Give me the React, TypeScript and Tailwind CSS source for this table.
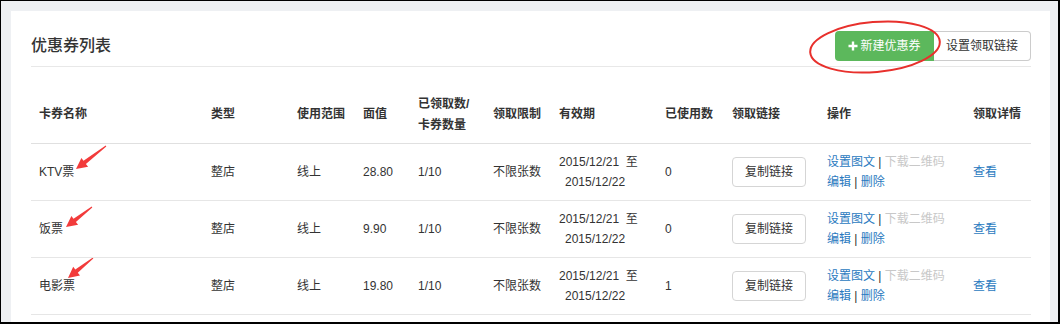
import React from "react";

type Pt = [number, number];

interface Coupon {
  name: string;
  price: string;
  used: string;
  arrow: [Pt, Pt];
}

const coupons: Coupon[] = [
  { name: "KTV票", price: "28.80", used: "0", arrow: [[75, 2], [45, 25]] },
  { name: "饭票", price: "9.90", used: "0", arrow: [[61, 6], [35, 26]] },
  { name: "电影票", price: "19.80", used: "1", arrow: [[62, 0], [37, 20]] },
];

const FONT = { fontFamily: '"Liberation Sans", "Noto Sans CJK SC", sans-serif' };

// hand-drawn style red pointer arrow (tail -> tip)
function RedArrow({ from, to }: { from: Pt; to: Pt }) {
  const [tx, ty] = from;
  const [px, py] = to;
  const len = Math.hypot(px - tx, py - ty);
  const ux = (px - tx) / len;
  const uy = (py - ty) / len;
  const nx = -uy;
  const ny = ux;
  const head = 11;
  const bx = px - ux * head;
  const by = py - uy * head;
  const p = (x: number, y: number) => `${x.toFixed(1)},${y.toFixed(1)}`;
  const pts = [
    p(px, py),
    p(bx + nx * 5.5, by + ny * 5.5),
    p(bx + nx * 2, by + ny * 2),
    p(tx + nx * 0.5, ty + ny * 0.5),
    p(tx - nx * 0.5, ty - ny * 0.5),
    p(bx - nx * 2, by - ny * 2),
    p(bx - nx * 5.5, by - ny * 5.5),
  ].join(" ");
  return (
    <svg className="absolute left-0 top-0 pointer-events-none" width="90" height="40">
      <polygon points={pts} fill="#f23b3b" />
    </svg>
  );
}

function Header() {
  return (
    <div className="flex items-center justify-between h-[30px] mb-[5px]">
      <h2 className="text-[16px] font-medium text-[#333] leading-[30px]">优惠券列表</h2>
      <div className="relative flex">
        <button className="h-[30px] w-[99px] bg-[#5cb85c] text-white text-[12px] rounded-l-[4px] flex items-center justify-center">
          <svg width="10" height="10" viewBox="0 0 10 10" className="mr-[2px]">
            <path d="M5 0.5V9.5M0.5 5H9.5" stroke="#fff" strokeWidth="2.4" />
          </svg>
          新建优惠券
        </button>
        <button className="h-[30px] w-[97px] bg-white text-[#333] text-[12px] border border-[#ccc] border-l-0 rounded-r-[4px]">
          设置领取链接
        </button>
        <svg
          className="absolute left-[-30px] top-[-12px] pointer-events-none"
          width="140"
          height="60"
        >
          <ellipse
            cx="70"
            cy="28"
            rx="65"
            ry="25"
            transform="rotate(-5 70 28)"
            fill="none"
            stroke="#e8302c"
            strokeWidth="2"
          />
        </svg>
      </div>
    </div>
  );
}

export default function App() {
  const th = "px-2 text-left font-bold align-middle";
  const td = "px-2 align-middle border-b border-[#e6e6e6]";
  return (
    <div
      className="w-[1060px] h-[324px] bg-[#eef0f3] border-l border-t border-r-2 border-b-2 border-black pt-[10px] pl-[10px] pr-[8px] overflow-hidden"
      style={FONT}
    >
      <div className="bg-white h-full pl-5 pr-[19px] pt-5">
        <div className="border-b border-[#e8e8e8]">
          <Header />
        </div>

        <table className="w-full table-fixed border-collapse mt-[20px] text-[12px] text-[#333]">
          <colgroup>
            <col className="w-[172px]" />
            <col className="w-[86px]" />
            <col className="w-[66px]" />
            <col className="w-[55px]" />
            <col className="w-[75px]" />
            <col className="w-[66px]" />
            <col className="w-[106px]" />
            <col className="w-[67px]" />
            <col className="w-[95px]" />
            <col className="w-[146px]" />
            <col className="w-[66px]" />
          </colgroup>
          <thead>
            <tr className="h-[56px] border-b border-[#e0e0e0] leading-[21px]">
              <th className={th}>卡券名称</th>
              <th className={th}>类型</th>
              <th className={th}>使用范围</th>
              <th className={th}>面值</th>
              <th className={th}>
                已领取数/
                <br />
                卡券数量
              </th>
              <th className={th}>领取限制</th>
              <th className={th}>有效期</th>
              <th className={th}>已使用数</th>
              <th className={th}>领取链接</th>
              <th className={th}>操作</th>
              <th className={th}>领取详情</th>
            </tr>
          </thead>
          <tbody className="leading-[20px]">
            {coupons.map((c) => (
              <tr key={c.name} className="h-[57px]">
                <td className={`${td} relative`}>
                  {c.name}
                  <RedArrow from={c.arrow[0]} to={c.arrow[1]} />
                </td>
                <td className={td}>整店</td>
                <td className={td}>线上</td>
                <td className={td}>{c.price}</td>
                <td className={td}>1/10</td>
                <td className={td}>不限张数</td>
                <td className={td}>
                  <div>2015/12/21&nbsp;&nbsp;至</div>
                  <div className="pl-[6px]">2015/12/22</div>
                </td>
                <td className={td}>{c.used}</td>
                <td className={td}>
                  <button className="h-[30px] w-[74px] border border-[#d5d5d5] rounded-[4px] bg-white text-[#333] text-[12px]">
                    复制链接
                  </button>
                </td>
                <td className={td}>
                  <div>
                    <a className="text-[#2a7ac0]">设置图文</a> |{" "}
                    <span className="text-[#c8c8c8]">下载二维码</span>
                  </div>
                  <div>
                    <a className="text-[#2a7ac0]">编辑</a> |{" "}
                    <a className="text-[#2a7ac0]">删除</a>
                  </div>
                </td>
                <td className={td}>
                  <a className="text-[#2a7ac0]">查看</a>
                </td>
              </tr>
            ))}
          </tbody>
        </table>
      </div>
    </div>
  );
}
